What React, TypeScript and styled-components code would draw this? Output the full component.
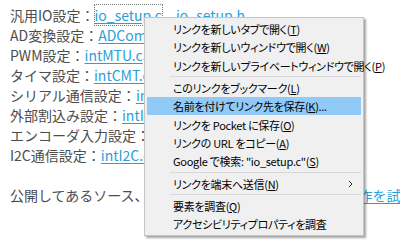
import styled, { createGlobalStyle } from "styled-components";

const GlobalStyle = createGlobalStyle`
  html, body {
    margin: 0;
    padding: 0;
    background: #ffffff;
  }
  body {
    width: 400px;
    height: 249px;
    overflow: hidden;
  }
`;

const Page = styled.div`
  position: relative;
  width: 400px;
  height: 249px;
  padding: 5px 0 0 10px;
  box-sizing: border-box;
  font-family: "Noto Sans CJK JP", sans-serif;
  font-size: 14px;
  color: #4d4d4d;
  overflow: hidden;
`;

const Block = styled.div`
  & + & {
    margin-top: 20px;
  }
`;

const Line = styled.div`
  height: 20px;
  line-height: 20px;
  white-space: nowrap;
`;

const Link = styled.a<{ focused?: boolean }>`
  color: #2a9fd8;
  text-decoration: underline;
  text-underline-offset: 2px;
  outline: ${(props) => (props.focused ? "1px dotted #777" : "none")};
`;

const Menu = styled.div`
  position: absolute;
  left: 144px;
  top: 17px;
  width: 220px;
  box-sizing: border-box;
  padding: 2px;
  background: #f0f0f0;
  border: 1px solid #c4c4c4;
  box-shadow: 2px 2px 2px rgba(0, 0, 0, 0.35);
  font-family: "Noto Sans CJK JP", sans-serif;
  font-size: 11px;
  font-feature-settings: "palt";
  letter-spacing: -0.3px;
  color: #000;
`;

const Item = styled.div<{ active?: boolean }>`
  height: 18.3px;
  display: flex;
  align-items: center;
  padding-left: 26px;
  padding-right: 8px;
  background: ${(props) => (props.active ? "#91c9f7" : "transparent")};
  white-space: nowrap;
`;

const Label = styled.span`
  flex: 1;
`;

const Separator = styled.div`
  height: 4px;
  display: flex;
  align-items: center;
  padding-left: 23px;

  &::after {
    content: "";
    flex: 1;
    height: 1px;
    background: #d7d7d7;
  }
`;

function Arrow() {
  return (
    <svg width="5" height="8" viewBox="0 0 5 8">
      <path d="M1 1l3 3-3 3" fill="none" stroke="#333" strokeWidth="1" />
    </svg>
  );
}

const lines: { label: string; link: string; extra?: string }[] = [
  { label: "AD変換設定：", link: "ADCom.c" },
  { label: "PWM設定：", link: "intMTU.c", extra: "、intMTU.h" },
  { label: "タイマ設定：", link: "intCMT.c" },
  { label: "シリアル通信設定：", link: "intSCI.c" },
  { label: "外部割込み設定：", link: "intIRQ.c" },
  { label: "エンコーダ入力設定：", link: "intMTU.c" },
  { label: "I2C通信設定：", link: "intI2C.c" },
];

function App() {
  return (
    <>
      <GlobalStyle />
      <Page>
        <Block>
          <Line>
            汎用IO設定：<Link focused>io_setup.c</Link>、<Link>io_setup.h</Link>
          </Line>
          {lines.map((l) => (
            <Line key={l.label}>
              {l.label}
              <Link>{l.link}</Link>
              {l.extra}
            </Line>
          ))}
        </Block>
        <Block>
          <Line>
            公開してあるソース、ご自由にお使いください。<Link>実機動作を試す</Link>
          </Line>
        </Block>

        <Menu>
          <Item>
            <Label>
              リンクを新しいタブで開く(<u>T</u>)
            </Label>
          </Item>
          <Item>
            <Label>
              リンクを新しいウィンドウで開く(<u>W</u>)
            </Label>
          </Item>
          <Item>
            <Label>
              リンクを新しいプライベートウィンドウで開く(<u>P</u>)
            </Label>
          </Item>
          <Separator />
          <Item>
            <Label>
              このリンクをブックマーク(<u>L</u>)
            </Label>
          </Item>
          <Item active>
            <Label>
              名前を付けてリンク先を保存(<u>K</u>)...
            </Label>
          </Item>
          <Item>
            <Label>
              リンクを Pocket に保存(<u>O</u>)
            </Label>
          </Item>
          <Item>
            <Label>
              リンクの URL をコピー(<u>A</u>)
            </Label>
          </Item>
          <Item>
            <Label>
              Google で検索: "io_setup.c"(<u>S</u>)
            </Label>
          </Item>
          <Separator />
          <Item>
            <Label>
              リンクを端末へ送信(<u>N</u>)
            </Label>
            <Arrow />
          </Item>
          <Separator />
          <Item>
            <Label>
              要素を調査(<u>Q</u>)
            </Label>
          </Item>
          <Item>
            <Label>アクセシビリティプロパティを調査</Label>
          </Item>
        </Menu>
      </Page>
    </>
  );
}

export default App;
